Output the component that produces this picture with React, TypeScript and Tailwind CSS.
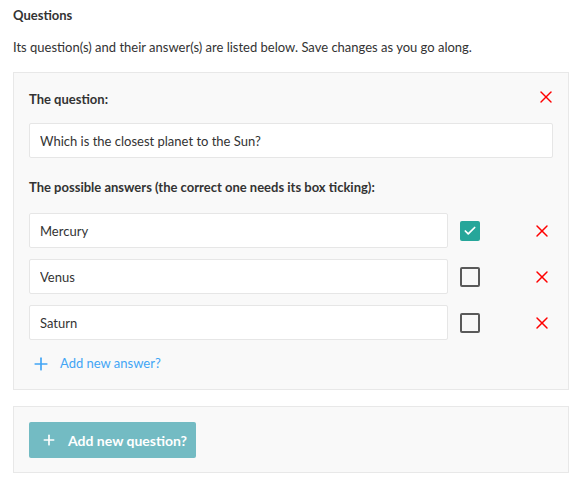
import { Check, Plus, X } from "lucide-react";

const answers = [
  { text: "Mercury", correct: true },
  { text: "Venus", correct: false },
  { text: "Saturn", correct: false },
];

const App = () => {
  return (
    <div
      className="w-[583px] h-[486px] bg-white text-[#333] px-[13px] pt-[6px]"
      style={{ fontFamily: "Lato, 'Liberation Sans', sans-serif" }}
    >
      <h2 className="text-[13px] font-bold h-[18px] leading-[18px]">Questions</h2>
      <p className="text-[13px] mt-[14px] leading-[18px]">
        Its question(s) and their answer(s) are listed below. Save changes as you go along.
      </p>

      {/* Question panel */}
      <div className="mt-[16px] w-[556px] h-[318px] bg-[#f9f9f9] border border-[#e8e8e8] px-[15px]">
        <div className="flex items-center justify-between h-[50px] pt-[3px]">
          <span className="text-[13px] font-bold">The question:</span>
          <X className="w-[20px] h-[20px] text-[#ff0000] mr-[-3px] mt-[-6px]" strokeWidth={1.75} />
        </div>
        <input
          readOnly
          value="Which is the closest planet to the Sun?"
          className="w-full h-[35px] bg-white border border-[#e6e6e6] rounded-[2px] px-[10px] text-[13px] outline-none"
        />
        <div className="text-[13px] font-bold mt-[20px] leading-[18px]">
          The possible answers (the correct one needs its box ticking):
        </div>
        <div className="mt-[17px] flex flex-col gap-[11px]">
          {answers.map((a) => (
            <div key={a.text} className="flex items-center">
              <input
                readOnly
                value={a.text}
                className="w-[419px] h-[35px] bg-white border border-[#e6e6e6] rounded-[2px] px-[10px] text-[13px] outline-none"
              />
              <div className="ml-[12px] w-[20px] h-[20px]">
                {a.correct ? (
                  <div className="w-full h-full bg-[#26a69a] rounded-[2px] flex items-center justify-center">
                    <Check className="w-[14px] h-[14px] text-white" strokeWidth={3} />
                  </div>
                ) : (
                  <div className="w-full h-full border-2 border-[#5a5a5a] rounded-[2px]" />
                )}
              </div>
              <X className="ml-[52px] w-[20px] h-[20px] text-[#ff0000]" strokeWidth={1.75} />
            </div>
          ))}
        </div>
        <div className="mt-[14px] flex items-center gap-[9px] text-[#42a5f5] text-[13px] h-[20px]">
          <Plus className="w-[20px] h-[20px] ml-[2px]" strokeWidth={2} />
          <span>Add new answer?</span>
        </div>
      </div>

      {/* Add question panel */}
      <div className="mt-[16px] w-[556px] h-[67px] bg-[#f9f9f9] border border-[#e8e8e8] px-[15px] pt-[15px]">
        <button className="h-[36px] w-[167px] bg-[#73bbc3] rounded-[2px] text-white text-[14px] font-bold flex items-center pl-[12px] gap-[11px]">
          <Plus className="w-[16px] h-[16px]" strokeWidth={2.5} />
          <span>Add new question?</span>
        </button>
      </div>
    </div>
  );
};

export default App;
